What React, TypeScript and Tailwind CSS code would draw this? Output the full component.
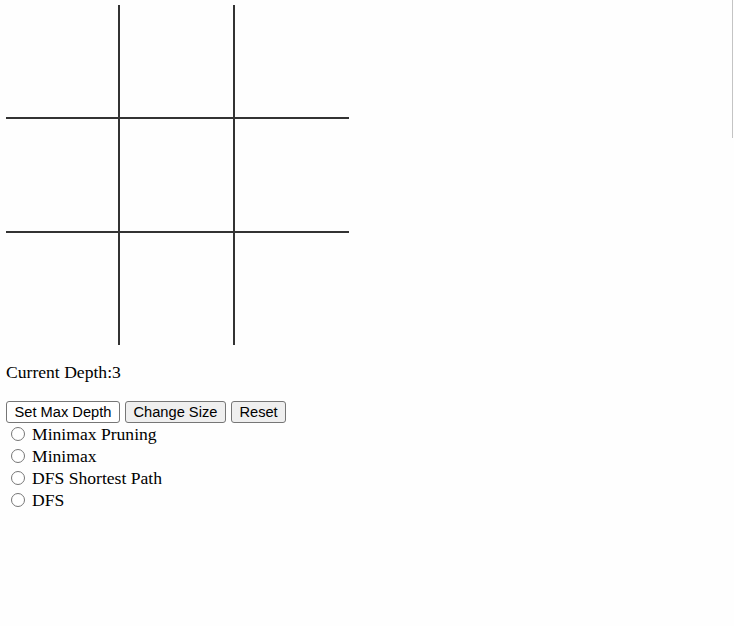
import { useState } from "react";

const algorithms = ["Minimax Pruning", "Minimax", "DFS Shortest Path", "DFS"];

export default function App() {
  const [depth] = useState(3);
  const [algo, setAlgo] = useState<string | null>(null);

  return (
    <div className="relative min-h-[626px] bg-[#fefefe] text-black font-['Liberation_Serif',serif] text-[17.6px]">
      {/* board */}
      <div className="pl-[6px] pt-[5px]">
        <div className="grid w-[343px] grid-cols-[112px_113px_114px] grid-rows-[112px_112px_112px] gap-[2px] bg-[#333333]">
          {Array.from({ length: 9 }).map((_, i) => (
            <div key={i} className="bg-[#fefefe]" />
          ))}
        </div>
      </div>

      <div className="ml-[6px] mt-[17px] h-[20px] leading-[20px]">Current Depth:{depth}</div>

      {/* controls */}
      <div className="ml-[6px] mt-[19px] flex gap-[5px] font-['Liberation_Sans',Arial,sans-serif] text-[14.67px]">
        <button className="h-[22px] rounded-[3px] border border-[#767676] bg-white px-[7.5px] leading-[18px]">
          Set Max Depth
        </button>
        <button className="h-[22px] rounded-[3px] border border-[#767676] bg-[#efefef] px-[7.5px] leading-[18px]">
          Change Size
        </button>
        <button className="h-[22px] rounded-[3px] border border-[#767676] bg-[#efefef] px-[7.5px] leading-[18px]">
          Reset
        </button>
      </div>

      <div className="flex flex-col">
        {algorithms.map((a) => (
          <label key={a} className="flex h-[22px] items-center">
            <input
              type="radio"
              name="algo"
              checked={algo === a}
              onChange={() => setAlgo(a)}
              className="ml-[11px] mr-[7px] h-[14px] w-[14px]"
            />
            <span>{a}</span>
          </label>
        ))}
      </div>

      {/* scrollbar edge */}
      <div className="absolute right-[1px] top-0 h-[138px] w-[1px] bg-[#c4c4c4]" />
    </div>
  );
}
